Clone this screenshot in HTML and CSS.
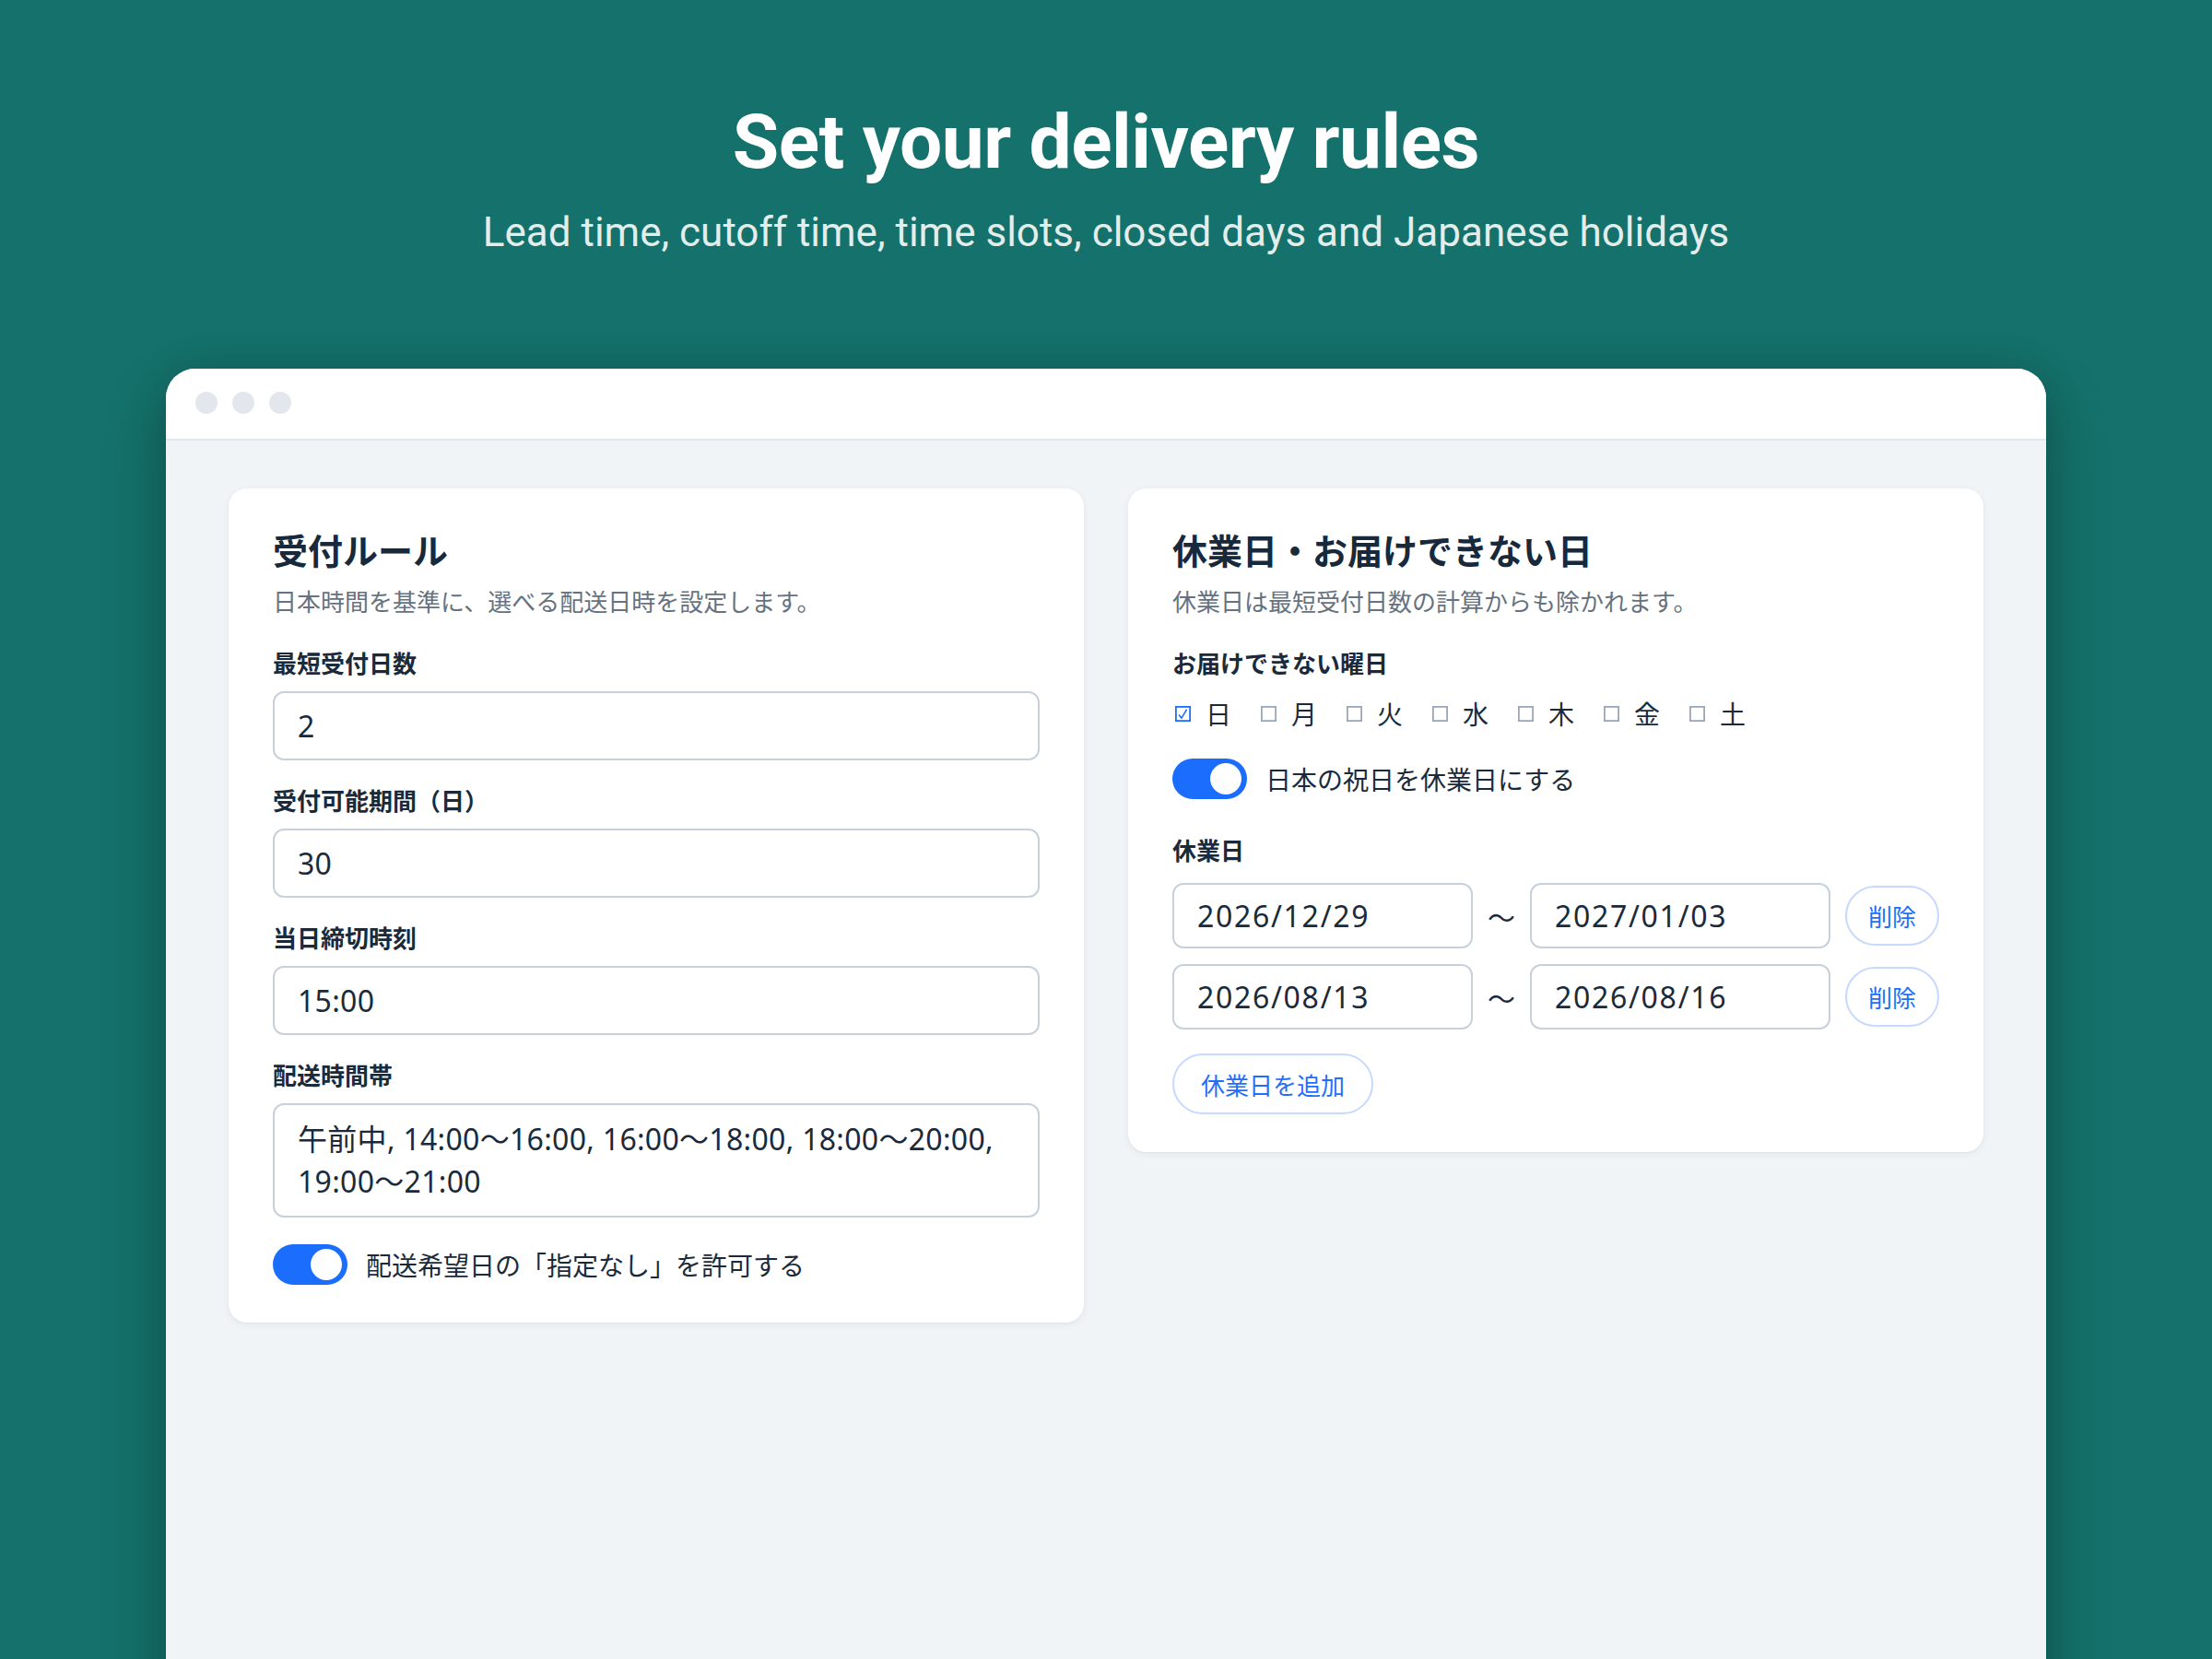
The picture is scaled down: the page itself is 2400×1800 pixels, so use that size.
FILE: index.html
```html
<!DOCTYPE html>
<html lang="ja">
<head>
<meta charset="utf-8">
<title>Set your delivery rules</title>
<link rel="stylesheet" href="styles.css">
</head>
<body>
<header class="hero">
  <h1 class="hero-title">Set your delivery rules</h1>
  <p class="hero-sub">Lead time, cutoff time, time slots, closed days and Japanese holidays</p>
</header>

<div class="window">
  <div class="titlebar">
    <span class="dot"></span><span class="dot"></span><span class="dot"></span>
  </div>
  <main class="content">
    <section class="card">
      <h2 class="card-title">受付ルール</h2>
      <p class="card-desc">日本時間を基準に、選べる配送日時を設定します。</p>
      <div class="fields">
        <div class="field">
          <label class="label" for="lead">最短受付日数</label>
          <input class="input" id="lead" type="text" value="2">
        </div>
        <div class="field">
          <label class="label" for="period">受付可能期間（日）</label>
          <input class="input" id="period" type="text" value="30">
        </div>
        <div class="field">
          <label class="label" for="cutoff">当日締切時刻</label>
          <input class="input" id="cutoff" type="text" value="15:00">
        </div>
        <div class="field">
          <label class="label" for="slots">配送時間帯</label>
          <textarea class="input textarea" id="slots" rows="2">午前中, 14:00〜16:00, 16:00〜18:00, 18:00〜20:00, 19:00〜21:00</textarea>
        </div>
      </div>
      <div class="toggle-row toggle-row--nodate">
        <span class="switch"></span>
        <span class="toggle-label">配送希望日の「指定なし」を許可する</span>
      </div>
    </section>

    <section class="card">
      <h2 class="card-title">休業日・お届けできない日</h2>
      <p class="card-desc">休業日は最短受付日数の計算からも除かれます。</p>
      <div class="label label--weekdays">お届けできない曜日</div>
      <div class="weekdays">
        <span class="wd"><svg class="cb cb--on" width="17" height="17" viewBox="0 0 17 17"><rect x="0.9" y="0.9" width="15.2" height="15.2" fill="none" stroke="#1d6ffb" stroke-width="1.8"/><path d="M4.2 9.6 L7 13.2 L12.6 3.6" fill="none" stroke="#1d6ffb" stroke-width="1.6" stroke-linejoin="round"/></svg><span class="wd-name">日</span></span>
        <span class="wd"><svg class="cb" width="17" height="17" viewBox="0 0 17 17"><rect x="0.9" y="0.9" width="15.2" height="15.2" fill="none" stroke="#9ba7b5" stroke-width="1.8"/></svg><span class="wd-name">月</span></span>
        <span class="wd"><svg class="cb" width="17" height="17" viewBox="0 0 17 17"><rect x="0.9" y="0.9" width="15.2" height="15.2" fill="none" stroke="#9ba7b5" stroke-width="1.8"/></svg><span class="wd-name">火</span></span>
        <span class="wd"><svg class="cb" width="17" height="17" viewBox="0 0 17 17"><rect x="0.9" y="0.9" width="15.2" height="15.2" fill="none" stroke="#9ba7b5" stroke-width="1.8"/></svg><span class="wd-name">水</span></span>
        <span class="wd"><svg class="cb" width="17" height="17" viewBox="0 0 17 17"><rect x="0.9" y="0.9" width="15.2" height="15.2" fill="none" stroke="#9ba7b5" stroke-width="1.8"/></svg><span class="wd-name">木</span></span>
        <span class="wd"><svg class="cb" width="17" height="17" viewBox="0 0 17 17"><rect x="0.9" y="0.9" width="15.2" height="15.2" fill="none" stroke="#9ba7b5" stroke-width="1.8"/></svg><span class="wd-name">金</span></span>
        <span class="wd"><svg class="cb" width="17" height="17" viewBox="0 0 17 17"><rect x="0.9" y="0.9" width="15.2" height="15.2" fill="none" stroke="#9ba7b5" stroke-width="1.8"/></svg><span class="wd-name">土</span></span>
      </div>
      <div class="toggle-row toggle-row--holiday">
        <span class="switch"></span>
        <span class="toggle-label">日本の祝日を休業日にする</span>
      </div>
      <div class="label label--closed">休業日</div>
      <div class="date-rows">
        <div class="date-row">
          <input class="input date" type="text" value="2026/12/29">
          <span class="tilde">〜</span>
          <input class="input date" type="text" value="2027/01/03">
          <button class="pill pill--delete" type="button">削除</button>
        </div>
        <div class="date-row">
          <input class="input date" type="text" value="2026/08/13">
          <span class="tilde">〜</span>
          <input class="input date" type="text" value="2026/08/16">
          <button class="pill pill--delete" type="button">削除</button>
        </div>
      </div>
      <button class="pill pill--add" type="button">休業日を追加</button>
    </section>
  </main>
</div>
</body>
</html>
```

FILE: styles.css
```css
* {
  box-sizing: border-box;
}

html, body {
  margin: 0;
  padding: 0;
}

body {
  width: 2400px;
  height: 1800px;
  overflow: hidden;
  background: #15716b;
  font-family: "Noto Sans", "Noto Sans CJK JP", sans-serif;
  color: #1b2a3a;
}

/* ---------- hero ---------- */
.hero {
  padding-top: 104px;
  text-align: center;
}

.hero-title {
  margin: 0;
  font-family: Roboto, "Noto Sans", sans-serif;
  font-weight: 700;
  font-size: 82px;
  line-height: 100px;
  letter-spacing: -0.5px;
  color: #ffffff;
}

.hero-sub {
  margin: 22px 0 0;
  font-family: Roboto, "Noto Sans", sans-serif;
  font-weight: 400;
  font-size: 44px;
  line-height: 52px;
  color: #e3eeec;
}

/* ---------- window ---------- */
.window {
  width: 2040px;
  height: 1500px;
  margin: 122px auto 0;
  background: #f0f4f7;
  border-radius: 32px 32px 0 0;
  overflow: hidden;
  box-shadow: 0 30px 70px rgba(0, 0, 0, 0.22), 0 0 40px rgba(0, 0, 0, 0.12);
}

.titlebar {
  height: 78px;
  background: #ffffff;
  border-bottom: 2px solid #e2e7ed;
  display: flex;
  align-items: center;
  gap: 16px;
  padding-left: 32px;
  padding-bottom: 2px;
}

.dot {
  width: 24px;
  height: 24px;
  border-radius: 50%;
  background: #e3e7ed;
}

.content {
  display: grid;
  grid-template-columns: 928px 928px;
  column-gap: 48px;
  align-items: start;
  padding: 52px 68px;
}

/* ---------- card ---------- */
.card {
  background: #ffffff;
  border-radius: 20px;
  padding: 40px 48px 41px;
  box-shadow: 0 2px 8px rgba(15, 30, 50, 0.06), 0 1px 2px rgba(15, 30, 50, 0.04);
}

.card-title {
  margin: 0;
  font-family: "Noto Sans CJK JP", sans-serif;
  font-weight: 700;
  font-size: 38px;
  line-height: 52px;
  color: #17293a;
}

.card-desc {
  margin: 10px 0 0;
  font-family: "Noto Sans CJK JP", sans-serif;
  font-size: 26px;
  line-height: 40px;
  color: #66727f;
}

.fields {
  display: flex;
  flex-direction: column;
  gap: 25px;
  margin-top: 29px;
}

.field {
  display: flex;
  flex-direction: column;
}

.label {
  display: block;
  font-family: "Noto Sans CJK JP", sans-serif;
  font-weight: 700;
  font-size: 26px;
  line-height: 36px;
  color: #1b2a3a;
  margin-bottom: 13px;
}

.input {
  display: block;
  width: 100%;
  height: 75px;
  margin: 0;
  padding: 0 25px;
  border: 2px solid #c8d1db;
  border-radius: 12px;
  background: #ffffff;
  font-family: "Noto Sans", "Noto Sans CJK JP", sans-serif;
  font-size: 32px;
  letter-spacing: 0.3px;
  color: #1b2a3a;
  outline: none;
}

.textarea {
  height: 124px;
  padding: 14px 25px;
  line-height: 46px;
  resize: none;
  overflow: hidden;
}

/* ---------- toggle ---------- */
.toggle-row {
  display: flex;
  align-items: center;
  gap: 20px;
}

.toggle-row--nodate {
  margin-top: 29px;
}

.switch {
  position: relative;
  flex: none;
  width: 81px;
  height: 44px;
  border-radius: 22px;
  background: #1a6dfd;
}

.switch::after {
  content: "";
  position: absolute;
  top: 5px;
  right: 6px;
  width: 34px;
  height: 34px;
  border-radius: 50%;
  background: #ffffff;
}

.toggle-label {
  font-family: "Noto Sans CJK JP", sans-serif;
  font-size: 28px;
  line-height: 40px;
  color: #1b2a3a;
}

/* ---------- weekdays ---------- */
.label--weekdays {
  margin-top: 29px;
  margin-bottom: 0;
}

.weekdays {
  display: flex;
  align-items: center;
  gap: 32px;
  margin-top: 17px;
  height: 40px;
  padding-left: 3px;
}

.wd {
  display: inline-flex;
  align-items: center;
  gap: 16px;
}

.cb {
  display: block;
  flex: none;
}

.wd-name {
  font-family: "Noto Sans CJK JP", sans-serif;
  font-size: 28px;
  line-height: 40px;
  color: #1b2a3a;
}

.toggle-row--holiday {
  margin-top: 29px;
}

.label--closed {
  margin-top: 37px;
  margin-bottom: 18px;
}

/* ---------- closed dates ---------- */
.date-rows {
  display: flex;
  flex-direction: column;
  gap: 17px;
}

.date-row {
  display: grid;
  grid-template-columns: 1fr 30px 1fr 102px;
  column-gap: 16px;
  align-items: center;
}

.input.date {
  height: 71px;
  letter-spacing: 1.7px;
}

.tilde {
  font-family: "Noto Sans CJK JP", sans-serif;
  font-size: 30px;
  line-height: 40px;
  text-align: center;
  color: #1b2a3a;
}

.pill {
  margin: 0;
  height: 65px;
  border: 2px solid #c7d9fd;
  border-radius: 999px;
  background: #ffffff;
  font-family: "Noto Sans CJK JP", sans-serif;
  font-size: 26px;
  color: #1f6ffb;
  white-space: nowrap;
  cursor: pointer;
}

.pill--delete {
  width: 102px;
  padding: 0;
}

.pill--add {
  display: block;
  height: 66px;
  margin-top: 26px;
  padding: 0 29px;
}
```
